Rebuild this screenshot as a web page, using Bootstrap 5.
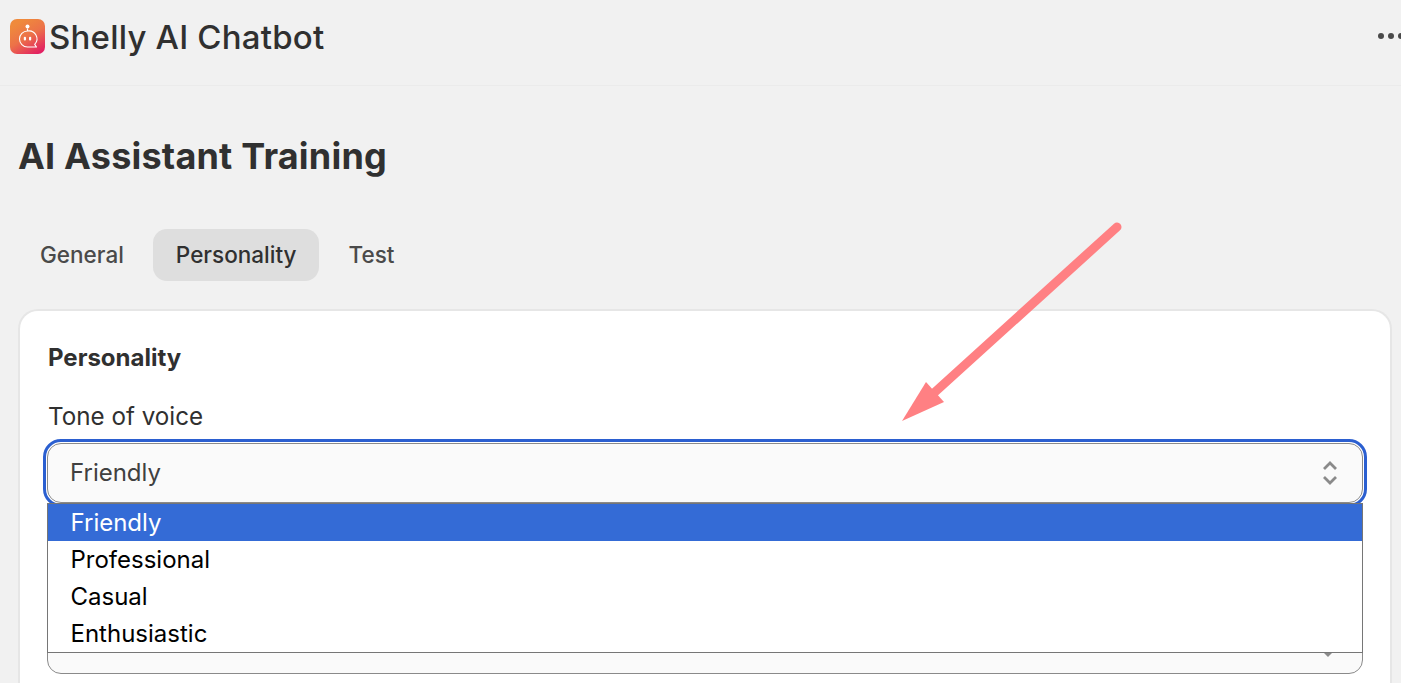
<!DOCTYPE html>
<html lang="en">
<head>
<meta charset="utf-8">
<title>Shelly AI Chatbot</title>
<link href="https://cdn.jsdelivr.net/npm/bootstrap@5.3.0/dist/css/bootstrap.min.css" rel="stylesheet">
<style>
html,body{height:683px;overflow:hidden}
body{background:#f1f1f1;font-family:Inter,"Liberation Sans",sans-serif;color:#303030;position:relative}
.app-head{height:86px;border-bottom:1px solid #ebebeb;padding:0 0 12px 10px}
.app-logo{width:35px;height:35px;flex:none}
.app-name{font-size:33px;font-weight:550;line-height:40px;margin:0 0 0 4px;color:#303030;letter-spacing:.2px}
.more-dots{margin-right:-6px;margin-top:-2px}
.page-wrap{padding:47px 9px 0 18px}
.page-title{font-size:36px;font-weight:700;line-height:46px;margin:0 0 50px;color:#303030;letter-spacing:.2px}
.tab-row{gap:6px;margin-bottom:28px;height:52px}
.tab-item{font-size:22.5px;font-weight:500;color:#4a4a4a;padding:0 23px;border-radius:14px;line-height:52px;height:52px}
.tab-item:first-child{margin-left:-1px}
.tab-on{background:#dedede;color:#303030}
.panel-card{background:#fff;border:2px solid #e6e6e6;border-radius:20px 20px 0 0;padding:28px 27px 0 27px;height:500px;border-bottom:0}
.panel-title{font-size:24px;font-weight:650;line-height:36px;margin:1px 0 26px 1px;color:#303030}
.field-label{font-size:24.2px;line-height:30px;margin:0 0 11px 1px;color:#303030;display:block;font-weight:400}
.fake-select{height:60px;background:#fafafa;border:1px solid #8a8a8a;border-radius:14px;font-size:24px;line-height:58px;padding:0 23px 0 22px;color:#404040;outline:3px solid #2b5fd0;outline-offset:1px;margin-bottom:112px}
.chev{width:18px;height:26px}
.fake-select-b{height:59px;background:#fafafa;border:1px solid #8a8a8a;border-radius:14px;padding-right:25px}
.opt-menu{position:absolute;left:47px;top:503px;width:1316px;height:150px;background:#fff;border:1px solid #767676;font-size:24px;line-height:37px;color:#000}
.opt-line{padding-left:22.5px;height:37px}
.opt-sel{background:#346bd6;color:#fff}
.note-arrow{position:absolute;left:890px;top:210px;width:250px;height:220px}
</style>
</head>
<body>
<header class="app-head d-flex align-items-center justify-content-between">
  <div class="d-flex align-items-center">
    <svg class="app-logo" viewBox="0 0 35 35" aria-hidden="true">
      <defs><linearGradient id="lg" x1="0.25" y1="0.1" x2="0.8" y2="1"><stop offset="0" stop-color="#ef8a3c"/><stop offset=".45" stop-color="#ec7248"/><stop offset="1" stop-color="#e21f63"/></linearGradient></defs>
      <rect width="35" height="35" rx="7" fill="url(#lg)"/>
      <circle cx="17.5" cy="7.5" r="2" fill="#fff"/>
      <path d="M17.5 9.5V12" stroke="#fff" stroke-width="1.2"/>
      <path d="M17.5 12a8 8 0 1 0 0 16h9l-1.8-2.6A8 8 0 0 0 17.5 12z" fill="none" stroke="#fff" stroke-width="1.1" stroke-linejoin="round"/>
      <rect x="13.8" y="17.8" width="2.2" height="3.6" rx="1" fill="#fff"/>
      <rect x="19" y="17.8" width="2.2" height="3.6" rx="1" fill="#fff"/>
    </svg>
    <h2 class="app-name">Shelly AI Chatbot</h2>
  </div>
  <svg class="more-dots" width="30" height="8" viewBox="0 0 30 8" aria-hidden="true"><circle cx="4" cy="4" r="3" fill="#4a4a4a"/><circle cx="14" cy="4" r="3" fill="#4a4a4a"/><circle cx="24" cy="4" r="3" fill="#4a4a4a"/></svg>
</header>
<main class="page-wrap">
  <h1 class="page-title">AI Assistant Training</h1>
  <div class="d-flex tab-row">
    <div class="tab-item">General</div>
    <div class="tab-item tab-on">Personality</div>
    <div class="tab-item">Test</div>
  </div>
  <section class="panel-card">
    <h3 class="panel-title">Personality</h3>
    <label class="field-label">Tone of voice</label>
    <div class="fake-select d-flex align-items-center justify-content-between">
      <span>Friendly</span>
      <svg class="chev" viewBox="0 0 18 26" aria-hidden="true"><path d="M3 9l6-6 6 6M3 17l6 6 6-6" fill="none" stroke="#8a8a8a" stroke-width="2.8"/></svg>
    </div>
    <div class="fake-select-b d-flex align-items-center justify-content-end">
      <svg class="chev" viewBox="0 0 18 26" aria-hidden="true"><path d="M3 9l6-6 6 6M3 17l6 6 6-6" fill="none" stroke="#8a8a8a" stroke-width="2.8"/></svg>
    </div>
  </section>
</main>
<div class="opt-menu">
  <div class="opt-line opt-sel">Friendly</div>
  <div class="opt-line">Professional</div>
  <div class="opt-line">Casual</div>
  <div class="opt-line">Enthusiastic</div>
</div>
<svg class="note-arrow" viewBox="890 210 250 220" aria-hidden="true">
  <path d="M1117 227L935 392" stroke="#ff8083" stroke-width="9" stroke-linecap="round" fill="none"/>
  <path d="M902 421L926 382L944 402Z" fill="#ff8083"/>
</svg>
</body>
</html>
